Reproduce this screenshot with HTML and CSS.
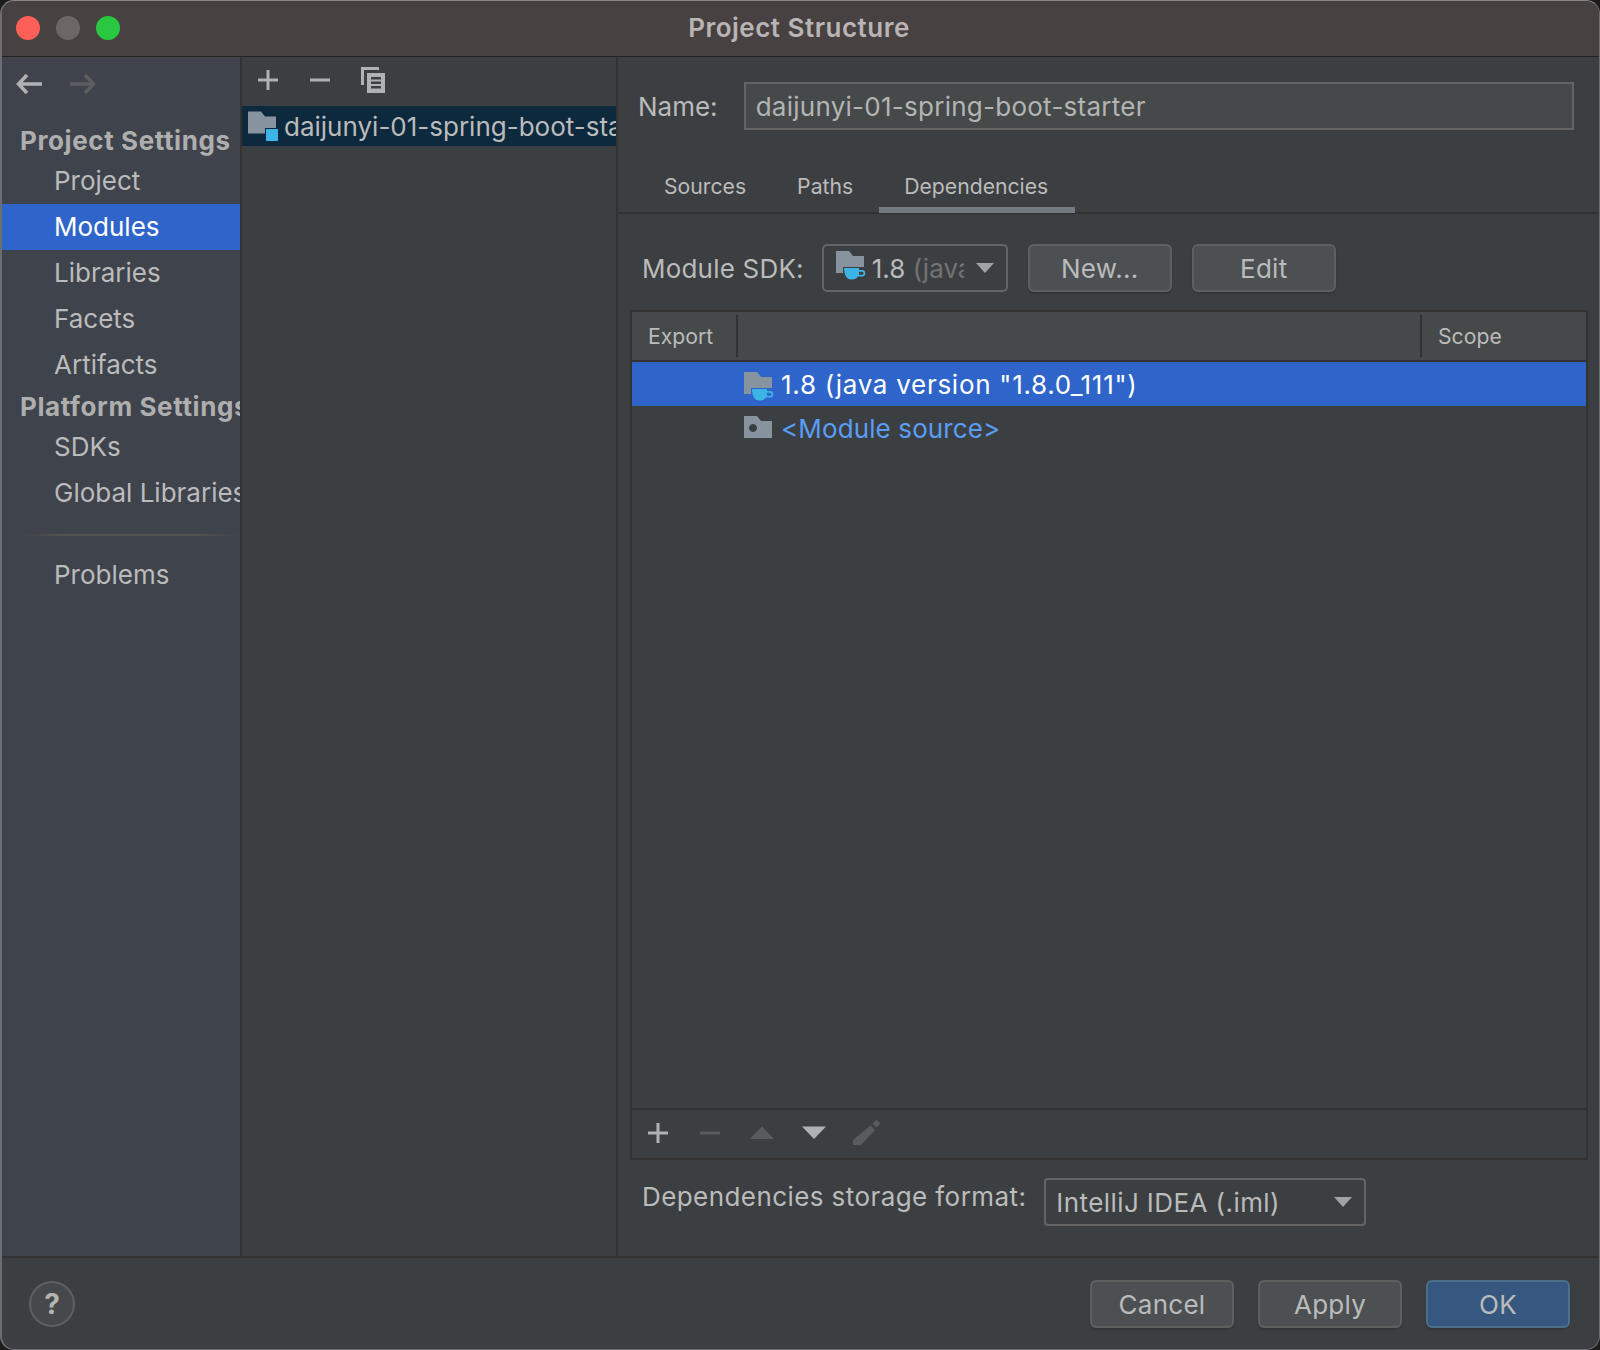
FILE: index.html
```html
<!DOCTYPE html>
<html lang="en">
<head>
<meta charset="UTF-8" />
<title>Project Structure</title>
<link rel="stylesheet" href="styles.css">
</head>
<body>
<svg class="defs" width="0" height="0">
  <symbol id="folder" viewBox="0 0 28 22"><path d="M0 0h13l4 5h11v11H7v6H0z"/></symbol>
  <symbol id="cup" viewBox="0 0 22 12"><path fill-rule="evenodd" d="M0 0h15v2h3a3.200 3.200 0 0 1 0 6.500h-4C12.500 10.500 11 11.500 8 11.500H7C3 11.500 0 7 0 0zM15 3.800v3h3a1.500 1.500 0 0 0 0-3z"/></symbol>
</svg>
<div class="window">
  <div class="titlebar">
    <div class="lights">
      <span class="light red"></span>
      <span class="light grey"></span>
      <span class="light green"></span>
    </div>
    <div class="title">Project Structure</div>
  </div>

  <div class="main">
    <!-- left nav -->
    <div class="sidebar">
      <div class="nav-arrows">
        <svg class="arrow" width="26" height="22" viewBox="0 0 26 22"><path d="M11 2 2.500 11 11 20M3 11h23" /></svg>
        <svg class="arrow off" width="26" height="22" viewBox="0 0 26 22"><path d="M15 2l8.500 9L15 20M23 11H0" /></svg>
      </div>
      <div class="nav-head">Project Settings</div>
      <div class="nav-item">Project</div>
      <div class="nav-item active">Modules</div>
      <div class="nav-item">Libraries</div>
      <div class="nav-item">Facets</div>
      <div class="nav-item">Artifacts</div>
      <div class="nav-head second">Platform Settings</div>
      <div class="nav-item">SDKs</div>
      <div class="nav-item">Global Libraries</div>
      <div class="nav-sep"></div>
      <div class="nav-item">Problems</div>
    </div>

    <!-- module list -->
    <div class="modules">
      <div class="mod-tools">
        <svg class="tool" width="20" height="20" viewBox="0 0 20 20"><path d="M8.500 0h3v8.500H20v3h-8.500V20h-3v-8.500H0v-3h8.500z"/></svg>
        <svg class="tool" width="20" height="20" viewBox="0 0 20 20"><path d="M0 8.500h20v3H0z"/></svg>
        <svg class="tool" width="24" height="26" viewBox="0 0 24 26"><path d="M0 0h18v3H3v15H0z"/><path fill-rule="evenodd" d="M6 6h18v20H6zM10 10v2.500h10V10zM10 14.500V17h10v-2.500zM10 19v2.500h10V19z"/></svg>
      </div>
      <div class="mod-row">
        <span class="mod-icon">
          <svg class="folder" width="28" height="23" viewBox="0 0 28 22"><path d="M0 0h13l4 5h11v17H0z"/></svg>
          <span class="mod-badge"></span>
        </span>
        <span class="mod-name">daijunyi-01-spring-boot-starter</span>
      </div>
    </div>

    <!-- module settings -->
    <div class="content">
      <div class="name-row">
        <label class="name-label">Name:</label>
        <div class="name-input">daijunyi-01-spring-boot-starter</div>
      </div>
      <div class="tabs">
        <div class="tab">Sources</div>
        <div class="tab">Paths</div>
        <div class="tab selected">Dependencies</div>
      </div>
      <div class="sdk-row">
        <span class="sdk-label">Module SDK:</span>
        <div class="combo sdk-combo">
          <span class="sdk-icon">
            <svg class="folder" width="28" height="22"><use href="#folder"/></svg>
            <svg class="cup" width="22" height="12"><use href="#cup"/></svg>
          </span>
          <span class="sdk-value">1.8 <em>(java version "1.8.0_111")</em></span>
          <span class="caret"></span>
        </div>
        <button class="btn">New...</button>
        <button class="btn">Edit</button>
      </div>

      <div class="dep-table">
        <div class="dep-head">
          <div class="col-export">Export</div>
          <div class="col-name"></div>
          <div class="col-scope">Scope</div>
        </div>
        <div class="dep-row current">
          <span class="sdk-icon">
            <svg class="folder" width="28" height="22"><use href="#folder"/></svg>
            <svg class="cup" width="22" height="12"><use href="#cup"/></svg>
          </span>
          <span class="sdk-title">1.8 (java version "1.8.0_111")</span>
        </div>
        <div class="dep-row">
          <span class="sdk-icon">
            <svg class="folder" width="28" height="22" viewBox="0 0 28 22"><path fill-rule="evenodd" d="M0 0h13l4 5h11v17H0zM9 8a4 4 0 1 0 0.010 0z"/></svg>
          </span>
          <span class="link">&lt;Module source&gt;</span>
        </div>
        <div class="dep-tools">
          <svg class="tool" width="20" height="20" viewBox="0 0 20 20"><path d="M8.500 0h3v8.500H20v3h-8.500V20h-3v-8.500H0v-3h8.500z"/></svg>
          <svg class="tool off" width="20" height="20" viewBox="0 0 20 20"><path d="M0 8.500h20v3H0z"/></svg>
          <svg class="tool off" width="24" height="20" viewBox="0 0 24 20"><path d="M12 3.500 24 16H0z"/></svg>
          <svg class="tool" width="24" height="20" viewBox="0 0 24 20"><path d="M0 3.500h24L12 16z"/></svg>
          <svg class="tool off" width="28" height="28" viewBox="0 0 28 28"><path d="M18.500 6.500l4.500 4.500L9 26H1v-5zM20.500 4.500l3-3a1.500 1.500 0 0 1 2 0l2 2a1.500 1.500 0 0 1 0 2l-3 3z"/></svg>
        </div>
      </div>

      <div class="format-row">
        <span class="format-label">Dependencies storage format:</span>
        <div class="combo format-combo">
          <span>IntelliJ IDEA (.iml)</span>
          <span class="caret"></span>
        </div>
      </div>
    </div>
  </div>

  <div class="footer">
    <div class="help">?</div>
    <div class="footer-btns">
      <button class="btn">Cancel</button>
      <button class="btn">Apply</button>
      <button class="btn primary">OK</button>
    </div>
  </div>
</div>
</body>
</html>
```

FILE: styles.css
```css
* {
    box-sizing: border-box;
}
html, body {
    margin: 0;
    height: 100%;
    background-color: #1c1c1c;
}
body {
    font-family: Inter, 'Liberation Sans', sans-serif;
    font-size: 26px;
    color: #bbbbbb;
}
.defs {
    position: absolute;
}
.window {
    width: 1600px;
    height: 1350px;
    display: flex;
    flex-direction: column;
    background-color: #3c3f41;
    border: 1px solid #6b6d70;
    border-left-width: 2px;
    border-top-color: #8a8686;
    border-radius: 14px;
    overflow: hidden;
}

/* title bar */
.titlebar {
    height: 56px;
    flex: none;
    display: flex;
    align-items: center;
    justify-content: center;
    position: relative;
    background-color: #484142;
    border-bottom: 1px solid #232323;
}
.lights {
    position: absolute;
    left: 14px;
    top: 15px;
    display: flex;
    gap: 16px;
}
.light {
    width: 24px;
    height: 24px;
    border-radius: 50%;
}
.light.red { background-color: #fe5f57; }
.light.grey { background-color: #6c6666; }
.light.green { background-color: #2ac840; }
.title {
    font-size: 26px;
    font-weight: 600;
    letter-spacing: 0.5px;
    margin: 0 3px 3px 0;
    color: #b9b5b5;
}

/* three columns */
.main {
    flex: 1;
    display: flex;
    min-height: 0;
}
.sidebar {
    width: 240px;
    flex: none;
    background-color: #3f434c;
    border-right: 2px solid #323232;
    overflow: hidden;
    white-space: nowrap;
}
.nav-arrows {
    height: 66px;
    padding: 16px 0 0 14px;
    display: flex;
    gap: 28px;
}
.arrow {
    fill: none;
    stroke: #afb1b3;
    stroke-width: 3.500;
}
.arrow.off {
    stroke: #5c5d5e;
}
.nav-head {
    height: 35px;
    line-height: 36px;
    padding-left: 18px;
    font-weight: 700;
    color: #aeaeae;
    letter-spacing: 0.6px;
}
.nav-head.second {
    height: 36px;
    line-height: 38px;
}
.nav-item {
    height: 46px;
    line-height: 46px;
    padding-left: 52px;
}
.nav-item.active {
    background-color: #2f65ca;
    color: #ffffff;
}
.nav-sep {
    height: 2px;
    margin: 18px 0 16px 18px;
    background: linear-gradient(to right, #3f434c, #52524f 20%, #52524f 80%, #3f434c);
}

.modules {
    width: 376px;
    flex: none;
    border-right: 2px solid #323232;
    overflow: hidden;
}
.mod-tools {
    height: 49px;
    display: flex;
    align-items: center;
    gap: 31.500px;
    padding-left: 16px;
    padding-bottom: 3px;
}
.tool {
    flex: none;
    fill: #afb1b3;
}
.tool.off {
    fill: #5a5b5c;
}
.mod-row {
    height: 40px;
    display: flex;
    align-items: center;
    gap: 6px;
    padding-left: 6px;
    background-color: #0d293e;
    white-space: nowrap;
}
.mod-icon {
    position: relative;
    width: 30px;
    height: 30px;
    flex: none;
}
.folder {
    display: block;
    fill: #87939f;
}
.mod-badge {
    position: absolute;
    right: 0;
    bottom: 0;
    width: 12px;
    height: 12px;
    background-color: #3db4e6;
    box-shadow: 0 0 0 1px #0d293e;
}

/* right side */
.content {
    flex: 1;
    min-width: 0;
    display: flex;
    flex-direction: column;
}
.name-row {
    height: 73px;
    flex: none;
    padding: 25px 25px 0 20px;
    display: flex;
    align-items: flex-start;
    gap: 26px;
}
.name-label {
    height: 47px;
    line-height: 49px;
}
.name-input {
    flex: 1;
    height: 48px;
    line-height: 46px;
    padding-left: 10px;
    background-color: #45494a;
    border: 2px solid #646464;
    color: #b4b4b4;
    letter-spacing: 0.26px;
}
.tabs {
    height: 84px;
    flex: none;
    padding: 15px 0 0 20.500px;
    display: flex;
    border-bottom: 2px solid #323232;
    font-size: 21.200px;
}
.tab {
    height: 68px;
    padding: 28px 25.500px 0;
}
.tab.selected {
    padding-right: 27px;
    border-bottom: 6px solid #747a80;
}
.sdk-row {
    height: 96px;
    flex: none;
    padding: 30px 0 0 24px;
    display: flex;
    align-items: flex-start;
}
.sdk-label {
    height: 47px;
    line-height: 50px;
    margin-right: 18px;
    letter-spacing: 0.2px;
}
.combo {
    height: 48px;
    display: flex;
    align-items: center;
    position: relative;
    border: 2px solid #646464;
    border-radius: 5px;
}
.sdk-combo {
    width: 186px;
    padding-left: 12px;
    margin-right: 20px;
    overflow: hidden;
}
.sdk-icon {
    position: relative;
    width: 30px;
    height: 34px;
    flex: none;
}
.cup {
    position: absolute;
    left: 8px;
    top: 17px;
    fill: #3db4e6;
}
.sdk-value {
    margin-left: 6px;
    width: 92px;
    overflow: hidden;
    white-space: nowrap;
}
.sdk-value em {
    font-style: normal;
    color: #737373;
}
.caret {
    width: 0;
    height: 0;
    position: absolute;
    right: 12px;
    top: 17px;
    border-left: 9px solid transparent;
    border-right: 9px solid transparent;
    border-top: 10px solid #a0a2a4;
}
.btn {
    width: 144px;
    height: 48px;
    margin-right: 20px;
    padding: 0;
    font-family: inherit;
    font-size: 26px;
    letter-spacing: 0.25px;
    color: #bbbbbb;
    background-color: #4c5052;
    border: 2px solid #5e6060;
    border-radius: 6px;
    box-shadow: 0 2px 2px rgba(0, 0, 0, 0.15);
}
.btn.primary {
    margin-right: 0;
    background-color: #365880;
    border-color: #4c708c;
}

/* dependencies table */
.dep-table {
    flex: none;
    height: 850px;
    margin: 0 11px 0 12px;
    display: flex;
    flex-direction: column;
    border: 2px solid #323232;
}
.dep-head {
    height: 50px;
    flex: none;
    display: flex;
    background-color: #45494a;
    border-bottom: 2px solid #323232;
    font-size: 21.200px;
    line-height: 48px;
}
.col-export {
    width: 106px;
    padding-left: 16px;
    margin: 3px 0 3px;
    line-height: 42px;
    border-right: 2px solid #323232;
}
.col-name {
    flex: 1;
    margin: 3px 0;
    border-right: 2px solid #323232;
}
.col-scope {
    width: 164px;
    padding-left: 16px;
}
.dep-row {
    height: 44px;
    flex: none;
    display: flex;
    align-items: center;
    gap: 7px;
    padding: 0 0 0 112px;
}
.dep-row .sdk-icon {
    margin-top: 10px;
}
.dep-row.current {
    background-color: #2f65ca;
    color: #ffffff;
}
.sdk-title {
    letter-spacing: 0.72px;
}
.link {
    color: #589df6;
    letter-spacing: 0.12px;
}
.dep-tools {
    margin-top: auto;
    height: 50px;
    flex: none;
    padding-bottom: 2px;
    display: grid;
    grid-auto-flow: column;
    grid-auto-columns: 52px;
    justify-content: start;
    justify-items: center;
    align-items: center;
    border-top: 2px solid #323232;
}

.format-row {
    padding: 18px 0 0 24px;
    display: flex;
    align-items: flex-start;
    gap: 18px;
}
.format-label {
    height: 38px;
    line-height: 38px;
    letter-spacing: 0.42px;
}
.format-combo {
    width: 322px;
    padding-left: 10px;
    border-radius: 4px;
    letter-spacing: 0.42px;
}

/* bottom buttons */
.footer {
    height: 93px;
    flex: none;
    display: flex;
    align-items: flex-start;
    justify-content: space-between;
    padding: 22px 29px 0 27px;
    border-top: 2px solid #323232;
}
.help {
    width: 46px;
    height: 46px;
    margin-top: 1px;
    line-height: 42px;
    text-align: center;
    font-size: 28px;
    font-weight: 700;
    border: 2px solid #5e6060;
    border-radius: 50%;
    background-color: #46494b;
    color: #b4b4b4;
}
.footer-btns {
    display: flex;
    gap: 24px;
}
.footer-btns .btn {
    margin-right: 0;
}
```
